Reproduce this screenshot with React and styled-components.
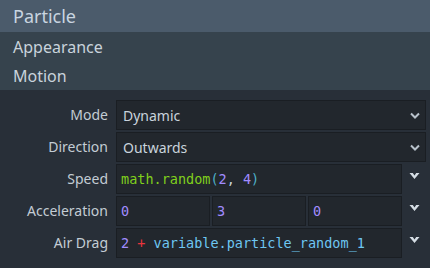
import React from "react";
import styled, { createGlobalStyle } from "styled-components";

const Global = createGlobalStyle`
  html, body {
    margin: 0;
    padding: 0;
    background: #282f38;
  }
  body {
    font-family: "Noto Sans", "Open Sans", sans-serif;
  }
`;

const Panel = styled.div`
  width: 430px;
  height: 268px;
  background: #282f38;
  overflow: hidden;
`;

const Header = styled.div`
  height: 32px;
  background: #4b5b6b;
  color: #c9d5e0;
  font-size: 18px;
  display: flex;
  align-items: center;
  padding-left: 13px;
`;

const Section = styled.div`
  height: 29px;
  background: #36434d;
  color: #c9d3dc;
  font-size: 16px;
  display: flex;
  align-items: center;
  padding-left: 13px;
`;

const Body = styled.div`
  display: flex;
  flex-direction: column;
  gap: 2px;
  padding: 10px 4px 0 0;
`;

const Row = styled.div`
  display: grid;
  grid-template-columns: 108px 1fr;
  column-gap: 8px;
  height: 30px;
`;

const Label = styled.div`
  color: #c3ccd4;
  font-size: 14px;
  text-align: right;
  line-height: 30px;
  white-space: nowrap;
`;

const Select = styled.div`
  display: flex;
  align-items: center;
  justify-content: space-between;
  background: #22272d;
  border: 1px solid #1a1e23;
  color: #c9d3dc;
  font-size: 14px;
  padding: 0 5px 0 6px;
`;

const Control = styled.div`
  display: flex;
  align-items: stretch;
`;

const Fields = styled.div`
  flex: 1;
  display: grid;
  grid-template-columns: repeat(${(p) => p.$count}, 1fr);
  gap: 2px;
`;

const Field = styled.div`
  background: #22272d;
  border: 1px solid #1a1e23;
  display: flex;
  align-items: center;
  padding-left: 4px;
  overflow: hidden;
`;

const Code = styled.span`
  font-family: "DejaVu Sans Mono", "Liberation Mono", monospace;
  font-size: 13.5px;
  white-space: pre;
`;

const Tok = styled.span`
  color: ${(p) => p.$c};
`;

const Expand = styled.div`
  width: 24px;
  display: flex;
  justify-content: center;
  padding-top: 9px;
  box-sizing: border-box;
`;

const colors = {
  fn: "#80d01c",
  paren: "#4fb0c8",
  num: "#a18cff",
  op: "#e8343c",
  ident: "#6ec6f2",
  punct: "#c9d3dc",
};

const Chevron = () => (
  <svg width="10" height="7" viewBox="0 0 10 7">
    <path d="M1 1.5 L5 5.5 L9 1.5" fill="none" stroke="#b8c2cb" strokeWidth="2" />
  </svg>
);

const BoldChevron = () => (
  <svg width="11" height="6" viewBox="0 0 11 6">
    <path d="M0.5 0 H3.8 L5.5 2.6 L7.2 0 H10.5 L5.5 6 Z" fill="#d5dde4" />
  </svg>
);

const SelectRow = ({ label, value }) => (
  <Row>
    <Label>{label}</Label>
    <Select>
      <span>{value}</span>
      <Chevron />
    </Select>
  </Row>
);

const FieldRow = ({ label, fields }) => (
  <Row>
    <Label>{label}</Label>
    <Control>
      <Fields $count={fields.length}>
        {fields.map((toks, i) => (
          <Field key={i}>
            <Code>
              {toks.map(([t, c], j) => (
                <Tok key={j} $c={colors[c]}>
                  {t}
                </Tok>
              ))}
            </Code>
          </Field>
        ))}
      </Fields>
      <Expand>
        <BoldChevron />
      </Expand>
    </Control>
  </Row>
);

export default function App() {
  return (
    <Panel>
      <Global />
      <Header>Particle</Header>
      <Section>Appearance</Section>
      <Section>Motion</Section>
      <Body>
        <SelectRow label="Mode" value="Dynamic" />
        <SelectRow label="Direction" value="Outwards" />
        <FieldRow
          label="Speed"
          fields={[
            [
              ["math.random", "fn"],
              ["(", "paren"],
              ["2", "num"],
              [", ", "punct"],
              ["4", "num"],
              [")", "paren"],
            ],
          ]}
        />
        <FieldRow
          label="Acceleration"
          fields={[[["0", "num"]], [["3", "num"]], [["0", "num"]]]}
        />
        <FieldRow
          label="Air Drag"
          fields={[
            [
              ["2", "num"],
              [" ", "punct"],
              ["+", "op"],
              [" ", "punct"],
              ["variable.particle_random_1", "ident"],
            ],
          ]}
        />
      </Body>
    </Panel>
  );
}
